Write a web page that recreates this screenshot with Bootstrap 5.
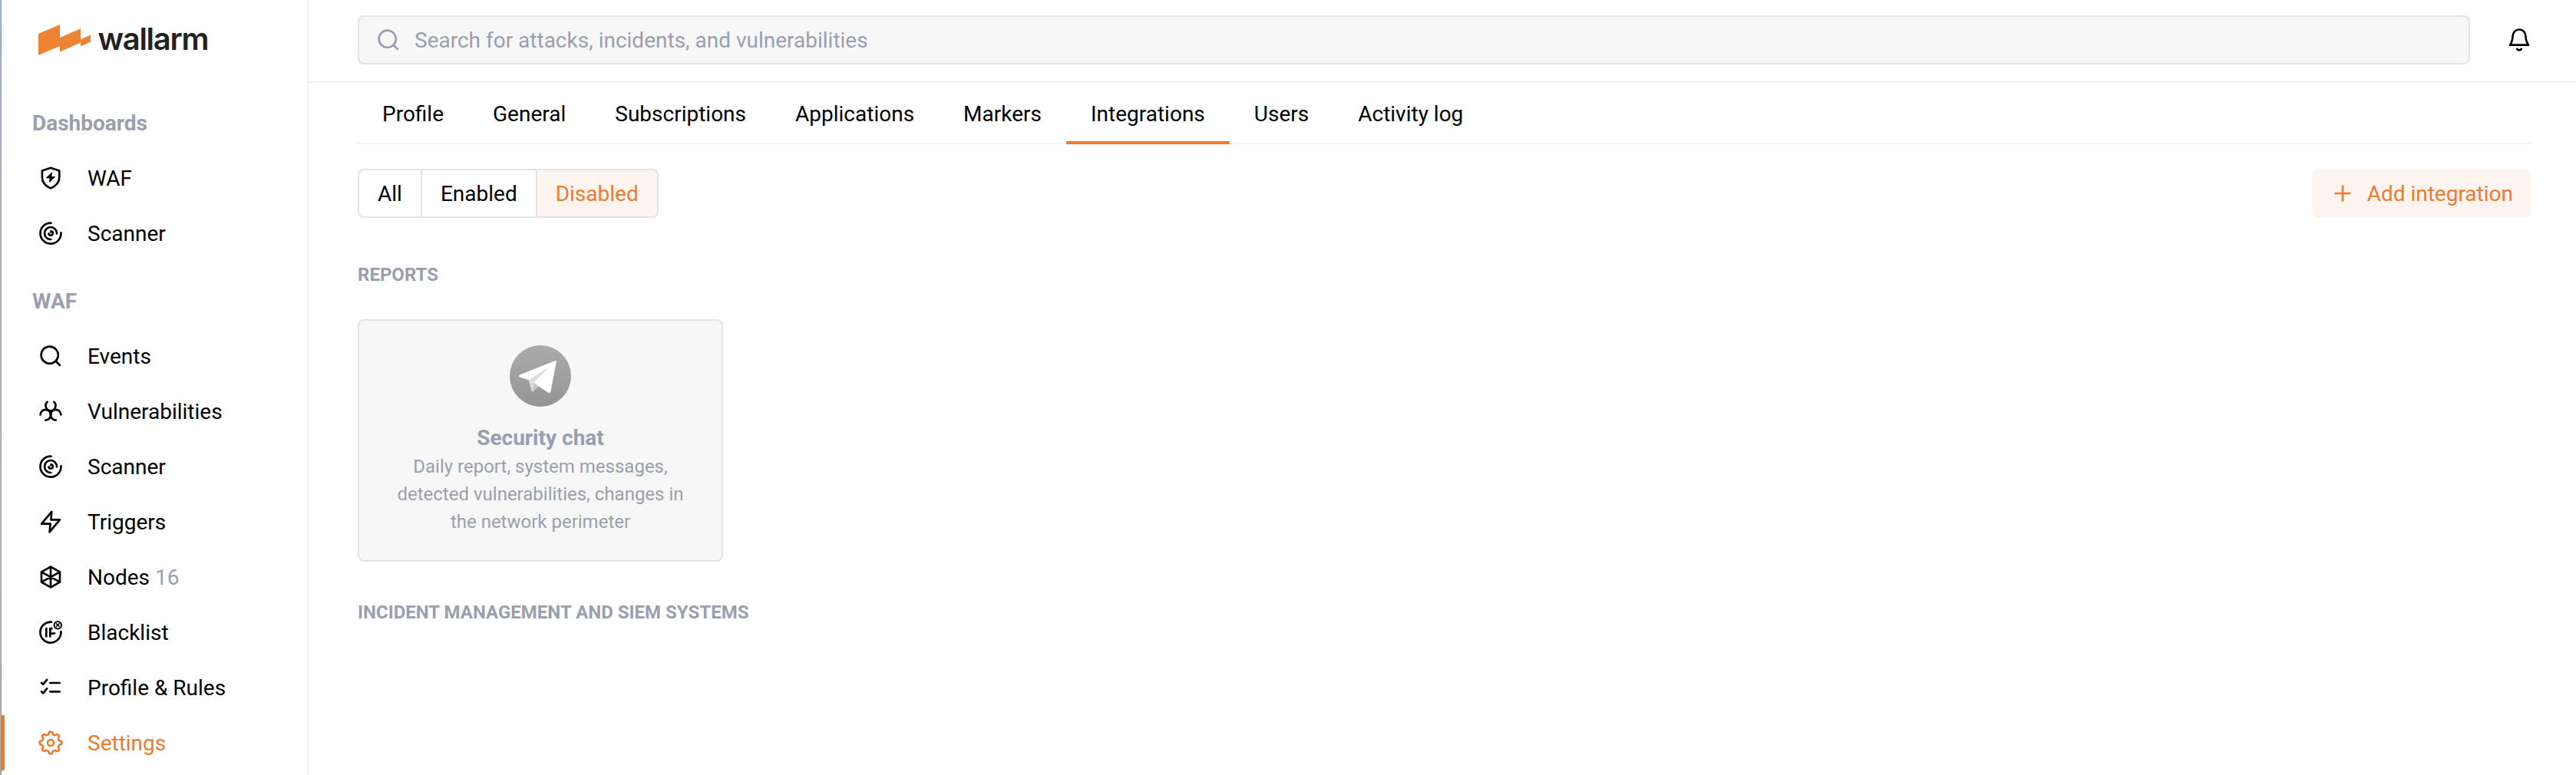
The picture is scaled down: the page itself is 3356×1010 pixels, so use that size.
<!DOCTYPE html>
<html lang="en">
<head>
<meta charset="utf-8">
<meta name="viewport" content="width=device-width, initial-scale=1">
<title>Wallarm – Integrations</title>
<link href="https://cdn.jsdelivr.net/npm/bootstrap@5.3.0/dist/css/bootstrap.min.css" rel="stylesheet">
<style>
:root{--brand:#ed7b2f;--muted:#999fb0;--line:#f2f2f3;--edge:#e2e2e8;--tint:#fef4ef;--fill:#f7f7f7}
body{font-family:Roboto,"Liberation Sans",sans-serif;font-size:28px;line-height:40px;color:#000;background:#fff;overflow:hidden}
.shell{height:1010px}
.window-edge{width:2px;background:linear-gradient(90deg,transparent 50%,rgba(0,0,0,.16) 50%),linear-gradient(#a9b8ce,#b4bcc8 20%,#bdbdbd 36%,#c0c0c0 75%,#acacac)}
.sidebar{width:400px;border-right:2px solid var(--line)}
.brand{height:108px;padding:24px 0 0 46px}
.brand svg{display:block}
.side-title{font-weight:700;color:var(--muted);padding-left:40px;height:40px;line-height:42px;margin:32px 0 16px}
.side-link{height:72px;padding:2px 0 0 44px;gap:32px;color:#000;border-left:4px solid transparent;border-radius:0}
.side-link .ico{margin-bottom:2px}
.side-link:hover{color:#000}
.side-link.current{color:var(--brand);border-left-color:var(--brand)}
.ico{width:32px;height:32px;flex:none;fill:none;stroke:currentColor;stroke-width:2.67;stroke-linecap:round;stroke-linejoin:round}
.text-soft{color:var(--muted)}
.topbar{height:108px;border-bottom:2px solid var(--line);padding:20px 58px 22px 64px;gap:48px}
.searchbox{height:64px;border:2px solid var(--edge);border-radius:8px;background:var(--fill);color:var(--muted);padding:0 22px;gap:18px}
.searchbox span{padding-top:2px}
.page{padding:0 58px 0 64px}
.tabs{height:80px;border-bottom:2px solid var(--line)}
.tabs .nav-link{color:#000;padding:21px 32px 0;height:80px;border-radius:0;border-bottom:4px solid transparent}
.tabs .nav-link.active{border-bottom-color:var(--brand)}
.toolbar{margin-top:32px}
.filters .btn,.add-btn{font-size:28px;line-height:40px;height:64px;padding:11px 24px 9px;border:2px solid var(--edge);border-radius:8px;color:#000;background:#fff}
.filters.btn-group>.btn:not(:first-child){margin-left:-2px}
.filters .btn.active{color:var(--brand);background:var(--tint);border-color:var(--edge)}
.add-btn,.add-btn:hover{border-color:var(--tint);background:var(--tint);color:var(--brand);gap:16px;padding-left:22px;padding-right:22px}
.add-btn .ico{margin-bottom:2px}
.group-title{font-size:24px;font-weight:700;line-height:32px;color:var(--muted);margin:58px 0 42px}
.tile{width:476px;height:316px;border:2px solid var(--edge);border-radius:8px;background:var(--fill);color:var(--muted);padding:32px 48px 0}
.tile+.group-title{margin-top:50px}
.tile-name{font-weight:700;font-size:28px;line-height:39px;margin:21px 0 0}
.tile-text{font-size:24px;line-height:36px;margin:0 -12px}
</style>
</head>
<body>
<svg class="d-none" xmlns="http://www.w3.org/2000/svg">
  <symbol id="i-shield" viewBox="0 0 32 32"><path d="M16 2.700 27.300 6.400V15c0 6.800-4.200 11.200-11.300 14.400C8.900 26.200 4.900 21.800 4.900 15V6.400z"/><path d="M17.300 9.200 10.400 15.900h4.700l-.5 5.200 7-6.700h-4.700z" fill="currentColor" stroke-width="1"/></symbol>
  <symbol id="i-scanner" viewBox="0 0 32 32"><path d="M16.600 2.600A13.500 13.500 0 1 0 29.500 15.400"/><path d="M16.300 24A8 8 0 1 1 24 16.400"/><path d="M16.500 13.400a2.700 2.700 0 1 1-3.100 3.200"/><path d="M15.200 14.800l.4.400" stroke-width="1.500"/></symbol>
  <symbol id="i-search" viewBox="0 0 32 32"><circle cx="14.700" cy="14.700" r="11.100"/><path d="M22.800 22.800 28 28"/></symbol>
  <symbol id="i-bio" viewBox="0 0 32 32"><path d="M11.600 3.800A6.700 6.700 0 0 0 16 15.300 6.700 6.700 0 0 0 20.400 3.800"/><path d="M2.600 20.400A6.700 6.700 0 0 1 16 20.600 6.700 6.700 0 0 1 9.200 27.500"/><path d="M29.400 20.400A6.700 6.700 0 0 0 16 20.600 6.700 6.700 0 0 0 22.800 27.500"/><path d="M16 15.300v5.300"/></symbol>
  <symbol id="i-bolt" viewBox="0 0 32 32"><path d="M17.300 2.900 4.100 18.700H15.600L14.600 29.300 27.900 13.300H16.400z"/></symbol>
  <symbol id="i-node" viewBox="0 0 32 32"><path d="M16 2.600 28 9.300v13.400L16 29.400 4 22.700V9.300zM16 2.600v26.800M4 9.300l24 13.400M28 9.300 4 22.700"/></symbol>
  <symbol id="i-block" viewBox="0 0 32 32"><path d="M17 2.600A13.500 13.500 0 1 0 29.400 15.200"/><g stroke-linecap="butt"><path d="M10.300 10v12.500M15.300 10v12.500M15.300 11.200h3.200M15.300 17.600h4c1.200 0 2-.5 2.400-1.200"/></g><circle cx="25.300" cy="6.700" r="4.700" stroke-width="2"/><path d="M23.500 4.900l3.600 3.600M27.100 4.900l-3.600 3.600" stroke-width="1.600"/></symbol>
  <symbol id="i-list" viewBox="0 0 32 32"><path d="M4 9.800l2.200 2.100 5-6M15.300 10H27.700M4 21.300l2.200 2.100 5-6M15.300 21.300H27.700"/></symbol>
  <symbol id="i-gear" viewBox="0 0 32 32"><path d="M28.160 13.580A2.430 2.430 0 0 1 28.160 18.420A3.100 3.100 0 0 0 26.310 22.890A2.430 2.430 0 0 1 22.890 26.310A3.100 3.100 0 0 0 18.420 28.160A2.430 2.430 0 0 1 13.580 28.160A3.100 3.100 0 0 0 9.110 26.310A2.430 2.430 0 0 1 5.690 22.890A3.100 3.100 0 0 0 3.840 18.420A2.430 2.430 0 0 1 3.840 13.580A3.100 3.100 0 0 0 5.690 9.110A2.430 2.430 0 0 1 9.110 5.690A3.100 3.100 0 0 0 13.580 3.840A2.430 2.430 0 0 1 18.420 3.840A3.100 3.100 0 0 0 22.890 5.690A2.430 2.430 0 0 1 26.310 9.110A3.100 3.100 0 0 0 28.160 13.580z"/><circle cx="16" cy="16" r="4"/></symbol>
  <symbol id="i-bell" viewBox="0 0 32 32"><path d="M3.900 22.700C6.400 19.300 7.300 15.800 7.500 11.500 7.700 6 11.300 2.500 16 2.500s8.300 3.500 8.500 9c.2 4.300 1.100 7.800 3.600 11.200z"/><path d="M13.300 28c1.200 1.900 4.200 1.900 5.400 0"/></symbol>
  <symbol id="i-plus" viewBox="0 0 32 32"><path d="M16 5.500v21M5.500 16h21" stroke-linecap="butt"/></symbol>
</svg>

<div class="shell d-flex">
  <div class="window-edge flex-shrink-0"></div>
  <aside class="sidebar flex-shrink-0 d-flex flex-column">
    <a class="brand d-block" href="#" aria-label="wallarm">
      <svg width="240" height="56" viewBox="48 24 240 56">
        <path fill="#ee8433" d="M50 44 78 32V49L105 37.300V51.600L118 45.600V54.600L105 60.600V55.600L78 67.600V60L50 72z"/>
        <text x="127.500" y="65" font-family="Inter,sans-serif" font-weight="600" font-size="40" fill="#222" textLength="145" lengthAdjust="spacing">wallarm</text>
      </svg>
    </a>
    <div class="side-title">Dashboards</div>
    <nav class="nav flex-column flex-nowrap">
      <a class="nav-link side-link d-flex align-items-center" href="#"><svg class="ico"><use href="#i-shield"/></svg>WAF</a>
      <a class="nav-link side-link d-flex align-items-center" href="#"><svg class="ico"><use href="#i-scanner"/></svg>Scanner</a>
    </nav>
    <div class="side-title">WAF</div>
    <nav class="nav flex-column flex-nowrap">
      <a class="nav-link side-link d-flex align-items-center" href="#"><svg class="ico"><use href="#i-search"/></svg>Events</a>
      <a class="nav-link side-link d-flex align-items-center" href="#"><svg class="ico"><use href="#i-bio"/></svg>Vulnerabilities</a>
      <a class="nav-link side-link d-flex align-items-center" href="#"><svg class="ico"><use href="#i-scanner"/></svg>Scanner</a>
      <a class="nav-link side-link d-flex align-items-center" href="#"><svg class="ico"><use href="#i-bolt"/></svg>Triggers</a>
      <a class="nav-link side-link d-flex align-items-center" href="#"><svg class="ico"><use href="#i-node"/></svg><span>Nodes <span class="text-soft">16</span></span></a>
      <a class="nav-link side-link d-flex align-items-center" href="#"><svg class="ico"><use href="#i-block"/></svg>Blacklist</a>
      <a class="nav-link side-link d-flex align-items-center" href="#"><svg class="ico"><use href="#i-list"/></svg>Profile &amp; Rules</a>
      <a class="nav-link side-link current d-flex align-items-center" href="#"><svg class="ico"><use href="#i-gear"/></svg>Settings</a>
    </nav>
  </aside>

  <div class="flex-grow-1 d-flex flex-column">
    <header class="topbar d-flex align-items-center">
      <div class="searchbox flex-grow-1 d-flex align-items-center"><svg class="ico"><use href="#i-search"/></svg><span>Search for attacks, incidents, and vulnerabilities</span></div>
      <svg class="ico"><use href="#i-bell"/></svg>
    </header>

    <main class="page">
      <nav class="nav tabs flex-nowrap">
        <a class="nav-link" href="#">Profile</a>
        <a class="nav-link" href="#">General</a>
        <a class="nav-link" href="#">Subscriptions</a>
        <a class="nav-link" href="#">Applications</a>
        <a class="nav-link" href="#">Markers</a>
        <a class="nav-link active" href="#">Integrations</a>
        <a class="nav-link" href="#">Users</a>
        <a class="nav-link" href="#">Activity log</a>
      </nav>

      <div class="toolbar d-flex justify-content-between">
        <div class="btn-group filters" role="group">
          <button type="button" class="btn">All</button>
          <button type="button" class="btn">Enabled</button>
          <button type="button" class="btn active">Disabled</button>
        </div>
        <button type="button" class="btn add-btn d-flex align-items-center"><svg class="ico"><use href="#i-plus"/></svg>Add integration</button>
      </div>

      <h2 class="group-title text-uppercase">Reports</h2>
      <div class="tile text-center">
        <svg class="d-block mx-auto" width="80" height="80" viewBox="0 0 80 80">
          <defs><linearGradient id="disc" x1="0" y1="0" x2="0" y2="1"><stop offset="0" stop-color="#ababab"/><stop offset="1" stop-color="#959595"/></linearGradient></defs>
          <circle cx="40" cy="40" r="40" fill="url(#disc)"/>
          <path d="M13 38.500 59 20.200Q61.200 19.600 60.700 22L53.400 60.500Q52.600 63.500 50 61.600L37.600 53.300 30.800 59.800Q29.300 61 28.800 59.200L25 45.300 13 41.400Q10.500 40 13 38.500z" fill="#fff"/>
          <path d="M25 45.200 52 27.700 31.500 48.300 29.600 60.400z" fill="#dcdcdc"/>
          <path d="M31.500 48.300 29.600 60.400 37.800 53.300z" fill="#c6c6c6"/>
        </svg>
        <h3 class="tile-name">Security chat</h3>
        <p class="tile-text">Daily report, system messages,<br>detected vulnerabilities, changes in<br>the network perimeter</p>
      </div>
      <h2 class="group-title text-uppercase">Incident management and SIEM systems</h2>
    </main>
  </div>
</div>
<script src="https://cdn.jsdelivr.net/npm/bootstrap@5.3.0/dist/js/bootstrap.bundle.min.js"></script>
</body>
</html>
